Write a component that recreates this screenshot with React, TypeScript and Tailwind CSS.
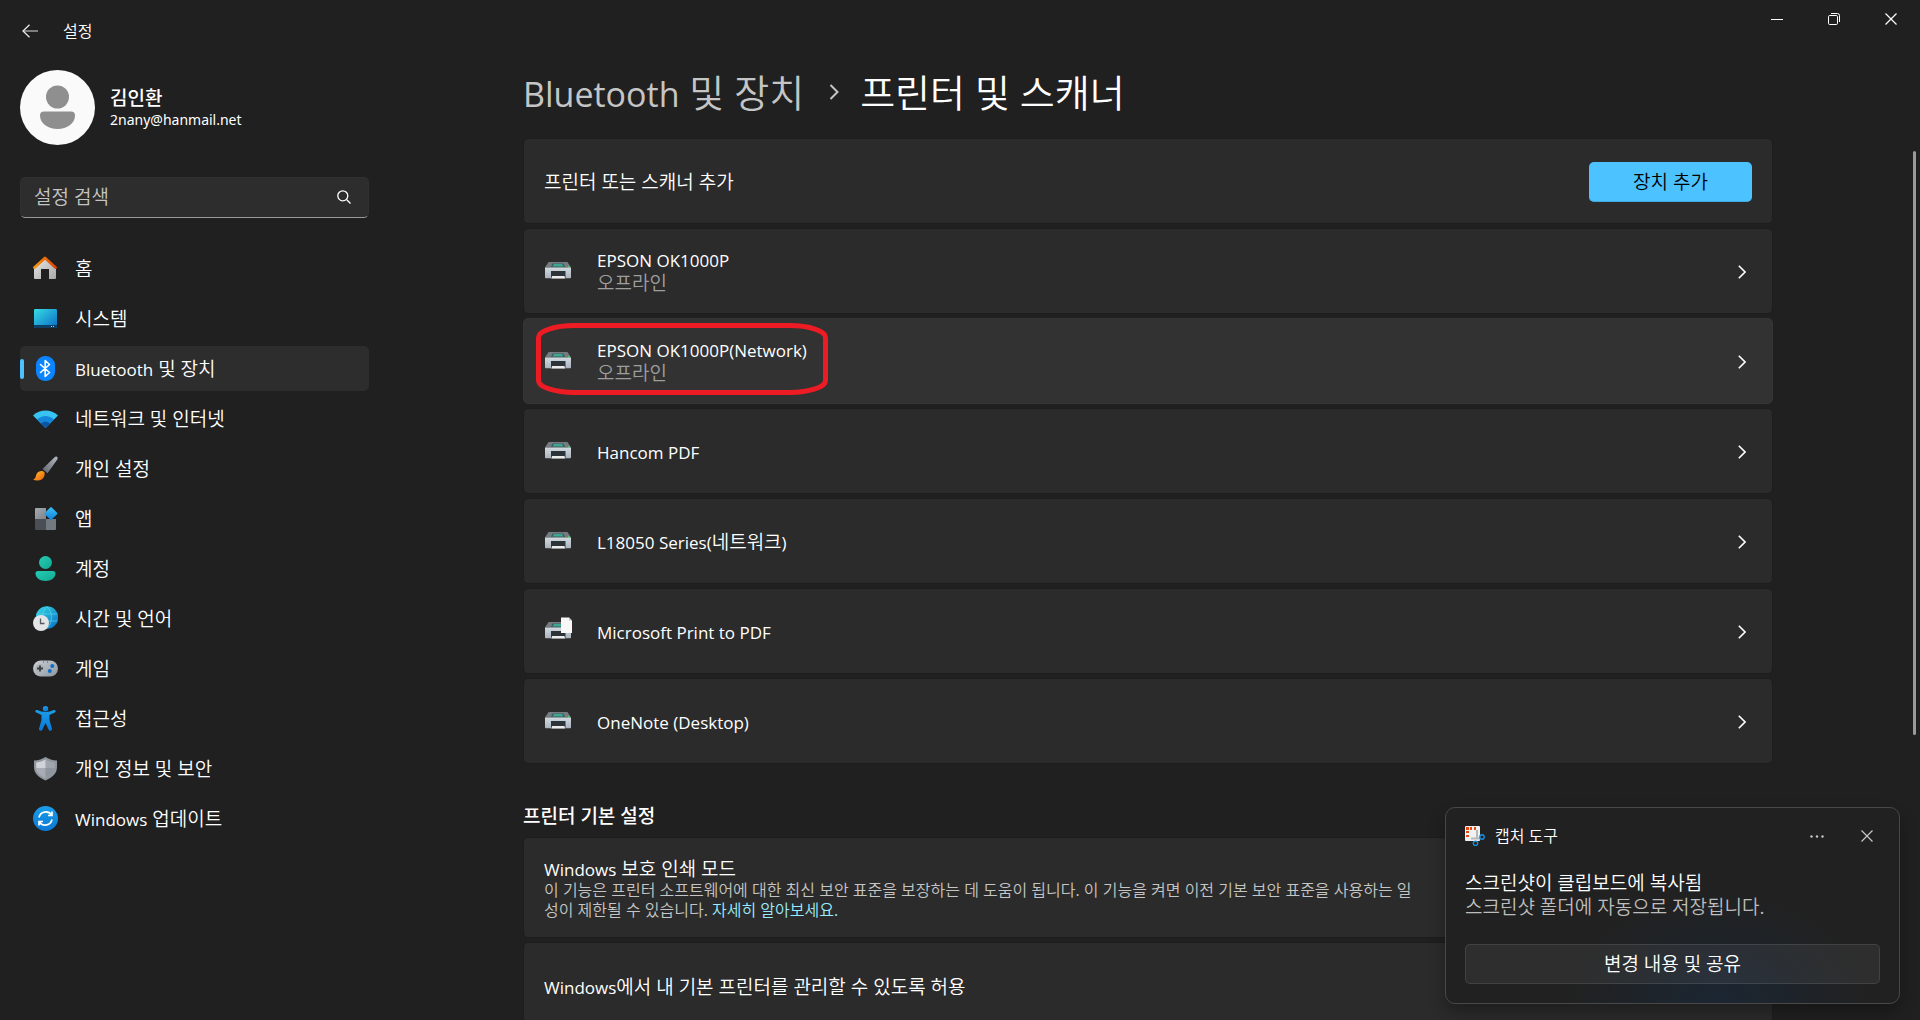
import type { ReactNode } from 'react'

type NavItem = {
  id: string
  label: ReactNode
  icon: ReactNode
}

type Printer = {
  name: ReactNode
  status?: string
  virtual?: boolean
  hovered?: boolean
}

function Gradients() {
  return (
    <svg width="0" height="0" className="absolute" aria-hidden="true">
      <defs>
        <linearGradient id="roof" x1="0" y1="0" x2="1" y2="0">
          <stop offset="0" stopColor="#f5940c" />
          <stop offset="1" stopColor="#dc4405" />
        </linearGradient>
        <linearGradient id="wall" x1="0" y1="0" x2="1" y2="1">
          <stop offset="0" stopColor="#e6e6e6" />
          <stop offset="1" stopColor="#a8a8a8" />
        </linearGradient>
        <linearGradient id="screen" x1="0" y1="0" x2="1" y2="1">
          <stop offset="0" stopColor="#37dbe6" />
          <stop offset="1" stopColor="#0a6cc4" />
        </linearGradient>
        <linearGradient id="handle" x1="1" y1="0" x2="0" y2="1">
          <stop offset="0" stopColor="#b4bac0" />
          <stop offset="1" stopColor="#5d6369" />
        </linearGradient>
        <linearGradient id="bristle" x1="0" y1="0" x2="1" y2="1">
          <stop offset="0" stopColor="#ffc326" />
          <stop offset="1" stopColor="#ee5a13" />
        </linearGradient>
        <linearGradient id="tile" x1="0" y1="0" x2="1" y2="1">
          <stop offset="0" stopColor="#a5abb3" />
          <stop offset="1" stopColor="#7c838b" />
        </linearGradient>
        <linearGradient id="diamond" x1="0" y1="0" x2="1" y2="1">
          <stop offset="0" stopColor="#3cc4f5" />
          <stop offset="1" stopColor="#0d7fdd" />
        </linearGradient>
        <linearGradient id="person" x1="0" y1="0" x2="1" y2="1">
          <stop offset="0" stopColor="#25cdb4" />
          <stop offset="1" stopColor="#12a891" />
        </linearGradient>
        <linearGradient id="metal" x1="0" y1="0" x2="1" y2="1">
          <stop offset="0" stopColor="#cdd3d8" />
          <stop offset="1" stopColor="#8d959d" />
        </linearGradient>
        <linearGradient id="blue" x1="0" y1="0" x2="0" y2="1">
          <stop offset="0" stopColor="#1b9de8" />
          <stop offset="1" stopColor="#0a78d6" />
        </linearGradient>
        <linearGradient id="casing" x1="0" y1="0" x2="0" y2="1">
          <stop offset="0" stopColor="#d3dae0" />
          <stop offset="1" stopColor="#a9b3bd" />
        </linearGradient>
      </defs>
    </svg>
  )
}

function NavIcon({ children }: { children: ReactNode }) {
  return (
    <svg viewBox="0 0 25 25" className="size-[25px] shrink-0" fill="none" aria-hidden="true">
      {children}
    </svg>
  )
}

const navItems: NavItem[] = [
  {
    id: 'home',
    label: '홈',
    icon: (
      <NavIcon>
        <path d="M1 12 12 3l11 9v10a1 1 0 0 1-1 1h-6V13H8v10H2a1 1 0 0 1-1-1z" fill="url(#wall)" />
        <path d="M1.500 11.500 12 2l10.500 9.500" stroke="url(#roof)" strokeWidth="2.800" strokeLinecap="round" strokeLinejoin="round" />
      </NavIcon>
    ),
  },
  {
    id: 'system',
    label: '시스템',
    icon: (
      <NavIcon>
        <rect x="1" y="3" width="23" height="19" rx="1.200" fill="url(#screen)" />
        <path d="M1 19h23v1.800a1.200 1.200 0 0 1-1.200 1.200H2.200A1.200 1.200 0 0 1 1 20.800z" fill="#0c3f63" />
        <path d="M18 20h1v1h-1zM20 20h1v1h-1z" fill="#9fd4f2" />
      </NavIcon>
    ),
  },
  {
    id: 'bluetooth',
    label: (
      <>
        <span className="text-[17px] leading-none">Bluetooth</span> 및 장치
      </>
    ),
    icon: (
      <NavIcon>
        <rect x="3" y="0" width="19" height="25" rx="9" fill="#0a84ff" />
        <path d="m7.500 8.500 9 8-4.300 4V4.500l4.300 4-9 8" stroke="#fff" strokeWidth="1.600" strokeLinejoin="round" strokeLinecap="round" />
      </NavIcon>
    ),
  },
  {
    id: 'network',
    label: '네트워크 및 인터넷',
    icon: (
      <NavIcon>
        <path d="M0 9.500C7 2.700 18 2.700 25 9.500L12.500 22z" fill="#37c4f3" />
        <path d="M4 13.500c5-4.800 12-4.800 17 0L12.500 22z" fill="#1487dd" />
        <path d="M8 17.500c2.700-2.500 6.300-2.500 9 0L12.500 22z" fill="#0b55a5" />
      </NavIcon>
    ),
  },
  {
    id: 'personal',
    label: '개인 설정',
    icon: (
      <NavIcon>
        <path d="M23.500.5c1.200.4 1.500 1.700.8 3L14.500 17.300 9.500 13 21.500 1.200c.6-.6 1.400-.9 2-.7z" fill="url(#handle)" />
        <path d="M11.500 16.500c1 3-1.500 8-6.500 8-2 0-3.800-.4-4.700-1 2.700-1.200 2.200-3 3.200-5.300 1.600-3.700 6.700-4.200 8-1.700z" fill="url(#bristle)" />
      </NavIcon>
    ),
  },
  {
    id: 'apps',
    label: '앱',
    icon: (
      <NavIcon>
        <path d="M2 3a1 1 0 0 1 1-1h10v11H2z" fill="url(#tile)" />
        <path d="M2 13h11v11H3a1 1 0 0 1-1-1z" fill="#4a4f55" />
        <path d="M13 13h10v10a1 1 0 0 1-1 1h-9z" fill="#737981" />
        <rect x="13.200" y="2.700" width="9.600" height="9.600" rx="1" transform="rotate(45 18 7.500)" fill="url(#diamond)" />
      </NavIcon>
    ),
  },
  {
    id: 'accounts',
    label: '계정',
    icon: (
      <NavIcon>
        <circle cx="12.500" cy="6.500" r="6.500" fill="url(#person)" />
        <path d="M5 15h15a2.500 2.500 0 0 1 2.500 2.500C22.500 22 18 25 12.500 25s-10-3-10-7.500A2.500 2.500 0 0 1 5 15z" fill="url(#person)" />
      </NavIcon>
    ),
  },
  {
    id: 'time',
    label: '시간 및 언어',
    icon: (
      <NavIcon>
        <circle cx="14" cy="11.500" r="11.200" fill="url(#screen)" />
        <path d="M3.500 8h21M3.500 15h21M14 .5c-6 6-6 16 0 22M14 .5c6 6 6 16 0 22" stroke="#5fe0ee" strokeOpacity=".6" />
        <circle cx="8" cy="17" r="8" fill="#e3e4e6" />
        <path d="M7.500 12.500v5h4" stroke="#55585c" strokeWidth="1.300" />
      </NavIcon>
    ),
  },
  {
    id: 'gaming',
    label: '게임',
    icon: (
      <NavIcon>
        <rect x="0" y="4.500" width="25" height="16" rx="8" fill="url(#metal)" />
        <circle cx="7" cy="12.500" r="4.500" fill="#aeb4ba" />
        <path d="M7 9.500v6M4 12.500h6" stroke="#3a3e42" strokeWidth="1.800" />
        <circle cx="19.300" cy="10" r="2" fill="#0e6fc9" />
        <circle cx="16.800" cy="15" r="2" fill="#0e6fc9" />
        <path d="M10 5.500h1v1h-1zM14 5.500h1v1h-1z" fill="#4a4e52" />
      </NavIcon>
    ),
  },
  {
    id: 'access',
    label: '접근성',
    icon: (
      <NavIcon>
        <circle cx="12.500" cy="2.700" r="2.700" fill="url(#blue)" />
        <path
          d="M4.200 4c3 1.200 5 2 8.300 2s5.300-.8 8.300-2c1.700-.6 2.700 1.700 1 2.500L16.500 9v5l2.500 8.700c.4 2-2.200 3-3.200 1.200L12.500 17l-3.300 6.900C8.200 25.700 5.600 24.700 6 22.700L8.500 14V9L3.200 6.500c-1.700-.8-.7-3.100 1-2.500z"
          fill="url(#blue)"
        />
      </NavIcon>
    ),
  },
  {
    id: 'privacy',
    label: '개인 정보 및 보안',
    icon: (
      <NavIcon>
        <path d="M12.500 1c3 2 7 3.300 11.500 3.500V11c0 6.500-4.500 10.500-11.500 13.500C5.500 21.500 1 17.500 1 11V4.500C5.500 4.300 9.500 3 12.500 1z" fill="#9097a0" />
        <path d="M12.500 3.500c2.700 1.500 5.700 2.600 9.300 2.900V11c0 5-3.300 8.300-9.300 11z" fill="#a0a6ad" />
        <path d="M12.500 3.500C9.800 5 6.800 6.100 3.200 6.400V11c0 5 3.300 8.300 9.300 11z" fill="#d0d4d8" />
        <path d="M3.200 12h18.600c-.7 4.400-4 7.500-9.300 10-5.300-2.500-8.600-5.600-9.300-10z" fill="#7f868e" fillOpacity=".5" />
      </NavIcon>
    ),
  },
  {
    id: 'update',
    label: (
      <>
        <span className="text-[17px] leading-none">Windows</span> 업데이트
      </>
    ),
    icon: (
      <NavIcon>
        <circle cx="12.500" cy="12.500" r="12.500" fill="url(#blue)" />
        <path d="M6 11.500a7 7 0 0 1 12.500-2.700M19 5.500v4h-4M19 13.500a7 7 0 0 1-12.500 2.700M6 19.500v-4h4" stroke="#fff" strokeWidth="1.700" />
      </NavIcon>
    ),
  },
]

const printers: Printer[] = [
  { name: 'EPSON OK1000P', status: '오프라인' },
  { name: 'EPSON OK1000P(Network)', status: '오프라인', hovered: true },
  { name: 'Hancom PDF' },
  {
    name: (
      <>
        L18050 Series(<span className="text-[19px] leading-none">네트워크</span>)
      </>
    ),
  },
  { name: 'Microsoft Print to PDF', virtual: true },
  { name: 'OneNote (Desktop)' },
]

function PrinterIcon({ virtual }: { virtual?: boolean }) {
  return (
    <svg viewBox="0 0 28 28" className="mb-0.5 size-7 shrink-0" aria-hidden="true">
      <path d="M4.500 5h19L27 10.500H1z" fill="#747c81" />
      <path d="M8.500 6.500h11l1.500 3.500H7z" fill="#3c5a60" />
      <path d="M10 7h8l1.500 2.500h-11z" fill="#3da890" />
      <path d="M24 9h1.500v1.500H24z" fill="#35e04c" />
      <path d="M1 10.500h26v10a.8.800 0 0 1-.8.800H1.800a.8.800 0 0 1-.8-.8z" fill="url(#casing)" />
      <path d="M7 14h14.500v6.800H7z" fill="#2d3439" />
      <path d="M8 19h12.500l.5 2.500H7.500z" fill="#ececec" />
      {virtual && (
        <>
          <path d="M17 .5h8l3 3V16H17z" fill="#f7f7f7" />
          <path d="m25 .5 3 3h-3z" fill="#bdbdbd" />
        </>
      )}
    </svg>
  )
}

function Chevron() {
  return (
    <svg viewBox="0 0 8 14" className="h-3.5 w-2 shrink-0" fill="none" stroke="#fff" strokeWidth="1.600" aria-hidden="true">
      <path d="m.8.8 6.200 6.200-6.200 6.200" />
    </svg>
  )
}

function CloseIcon() {
  return (
    <svg viewBox="0 0 12 12" className="size-3" stroke="currentColor" strokeWidth="1.200" aria-hidden="true">
      <path d="m.5.5 11 11M11.500.5l-11 11" />
    </svg>
  )
}

function TitleBar() {
  return (
    <header className="flex h-[62px] shrink-0 items-start justify-between">
      <div className="flex h-[61px] items-center gap-[25px] pl-[22px]">
        <button type="button" aria-label="뒤로">
          <svg viewBox="0 0 16 14" className="h-3.5 w-4" fill="none" aria-hidden="true">
            <path d="M1 7h15" stroke="#a8a8a8" strokeWidth="1.400" />
            <path d="M7.500.8 1 7l6.500 6.200" stroke="#e8e8e8" strokeWidth="1.300" />
          </svg>
        </button>
        <span className="text-base leading-5">설정</span>
      </div>
      <div className="flex pr-px">
        <button type="button" aria-label="최소화" className="flex h-[38px] w-[57px] items-center justify-center">
          <span className="h-px w-3 bg-white" />
        </button>
        <button type="button" aria-label="이전 크기로 복원" className="flex h-[38px] w-[57px] items-center justify-center">
          <svg viewBox="0 0 12 12" className="size-3" fill="none" stroke="#fff" aria-hidden="true">
            <rect x=".5" y="2.500" width="9" height="9" rx="1.200" />
            <path d="M3 .5h6.500a2 2 0 0 1 2 2V9" />
          </svg>
        </button>
        <button type="button" aria-label="닫기" className="flex h-[38px] w-[57px] items-center justify-center">
          <CloseIcon />
        </button>
      </div>
    </header>
  )
}

function Sidebar() {
  return (
    <aside className="w-[376px] shrink-0 pt-2 pr-[7px] pl-5">
      <div className="flex items-center gap-[15px]">
        <svg viewBox="0 0 75 75" className="size-[75px]" aria-hidden="true">
          <circle cx="37.500" cy="37.500" r="37.500" fill="#fafafa" />
          <circle cx="37.500" cy="27" r="11.500" fill="#8f8f8f" />
          <path d="M24 41.500h27a4 4 0 0 1 4 4C55 53.500 47 59 37.500 59S20 53.500 20 45.500a4 4 0 0 1 4-4z" fill="#8f8f8f" />
        </svg>
        <div>
          <p className="font-['Open_Sans','Noto_Sans_CJK_KR',sans-serif] text-[19px] leading-6 font-medium">김인환</p>
          <p className="font-['Noto_Sans',sans-serif] text-[14px] leading-5">2nany@hanmail.net</p>
        </div>
      </div>

      <label className="mt-8 flex h-[41px] items-center rounded-[5px] border border-[#303030] border-b-[#9a9a9a] bg-[#2d2d2d] pr-[17px] pb-0.5 pl-[13px]">
        <input
          type="text"
          aria-label="설정 검색"
          placeholder="설정 검색"
          className="min-w-0 flex-1 bg-transparent text-[19px] leading-6 outline-none placeholder:text-[#c5c5c5]"
        />
        <svg viewBox="0 0 14 14" className="size-3.5" fill="none" stroke="#fff" strokeWidth="1.300" aria-hidden="true">
          <circle cx="5.800" cy="5.800" r="5" />
          <path d="m9.500 9.500 4 4" />
        </svg>
      </label>

      <nav className="mt-7 flex flex-col gap-[5px]">
        {navItems.map((item) => {
          const active = item.id === 'bluetooth'
          return (
            <a
              key={item.id}
              href={`#${item.id}`}
              aria-current={active ? 'page' : undefined}
              className={`flex h-[45px] items-center rounded-[5px] ${active ? 'bg-[#2d2d2d]' : ''}`}
            >
              <span className={`h-5 w-1 rounded-full ${active ? 'bg-[#4cc2ff]' : ''}`} />
              <span className="ml-[9px]">{item.icon}</span>
              <span className="ml-[17px] text-[19px] leading-6">{item.label}</span>
            </a>
          )
        })}
      </nav>
    </aside>
  )
}

function PrinterRow({ printer }: { printer: Printer }) {
  return (
    <button
      type="button"
      className={`relative flex min-h-[86px] w-full items-center rounded-[5px] border pt-0.5 pr-[26px] pl-5 text-left ${
        printer.hovered ? 'border-[#353535] bg-[#323232]' : 'border-[#1d1d1d] bg-[#2b2b2b]'
      }`}
    >
      <PrinterIcon virtual={printer.virtual} />
      <span className={`ml-[25px] flex flex-1 flex-col ${printer.status ? '' : 'pt-0.5'}`}>
        <span className="text-[17px] leading-[22px]">{printer.name}</span>
        {printer.status && <span className="text-[19px] leading-[22px] text-[#9e9e9e]">{printer.status}</span>}
      </span>
      <Chevron />
      {printer.hovered && (
        <svg viewBox="0 0 292 72" className="absolute top-1 left-3 h-[72px] w-[292px]" fill="none" aria-hidden="true">
          <rect x="2.500" y="2.500" width="287" height="67" rx="36" ry="12" stroke="#ed1c24" strokeWidth="5" />
        </svg>
      )}
    </button>
  )
}

function Toast() {
  return (
    <section className="absolute right-5 bottom-4 w-[455px] rounded-[10px] border border-[#484848] bg-[#212121] bg-[radial-gradient(ellipse_150px_110px_at_60%_100%,#1b2632,#212121)] px-[19px] pt-[18px] pb-[19px] shadow-[0_8px_16px_rgba(0,0,0,0.3)]">
      <div className="flex h-5 items-center">
        <svg viewBox="0 0 20 20" className="size-5" fill="none" aria-hidden="true">
          <rect width="15" height="15" rx="1" fill="#f1f1f1" />
          <path d="M1 1h3v3H1zM5 1h2v3H5zM9 1h2v3H9zM1 5h3v2H1zM1 9h3v2H1z" fill="#e2480f" />
          <path d="M12 4v9M6 12.500h9" stroke="#b3b8bc" strokeWidth="2" />
          <circle cx="17" cy="11" r="2.200" stroke="#1a8fdb" strokeWidth="1.400" />
          <circle cx="10.500" cy="17.300" r="2.200" stroke="#1a8fdb" strokeWidth="1.400" />
        </svg>
        <span className="ml-2.5 flex-1 text-base leading-5">캡처 도구</span>
        <button type="button" aria-label="추가 옵션" className="text-[#c8c8c8]">
          <svg viewBox="0 0 14 3" className="h-[3px] w-3.5" fill="currentColor" aria-hidden="true">
            <circle cx="1.500" cy="1.500" r="1.200" />
            <circle cx="7" cy="1.500" r="1.200" />
            <circle cx="12.500" cy="1.500" r="1.200" />
          </svg>
        </button>
        <button type="button" aria-label="알림 닫기" className="mr-[7px] ml-[37px] text-[#c8c8c8]">
          <CloseIcon />
        </button>
      </div>
      <p className="mt-[25px] text-[19px] leading-6">스크린샷이 클립보드에 복사됨</p>
      <p className="text-[19px] leading-6 text-[#bdbdbd]">스크린샷 폴더에 자동으로 저장됩니다.</p>
      <button type="button" className="mt-[25px] h-10 w-full rounded-[5px] border border-white/10 bg-white/6 text-[19px] leading-6">
        변경 내용 및 공유
      </button>
    </section>
  )
}

export default function App() {
  return (
    <div className="relative flex h-screen flex-col overflow-hidden bg-[#202020] font-['Open_Sans','Noto_Sans_CJK_KR_DemiLight','Noto_Sans_CJK_KR',sans-serif] text-white">
      <Gradients />
      <TitleBar />
      <div className="flex min-h-0 flex-1">
        <Sidebar />
        <main className="flex min-w-0 flex-1 justify-center overflow-hidden pt-1">
          <div className="w-full max-w-[1250px]">
            <h1 className="flex items-center text-[38px] leading-[52px]">
              <a href="#bluetooth" className="text-[#c5c5c5]">
                <span className="text-[34px] leading-none">Bluetooth</span> 및 장치
              </a>
              <svg viewBox="0 0 10 16" className="mr-[21px] ml-[25px] h-4 w-2.5" fill="none" stroke="#c5c5c5" strokeWidth="2" aria-hidden="true">
                <path d="m1.500 1 7 7-7 7" />
              </svg>
              <span>프린터 및 스캐너</span>
            </h1>

            <div className="mt-5 flex flex-col gap-1">
              <div className="flex min-h-[86px] items-center justify-between rounded-[5px] border border-[#1d1d1d] bg-[#2b2b2b] px-5 pt-0.5">
                <span className="text-[19px] leading-6">프린터 또는 스캐너 추가</span>
                <button type="button" className="h-10 w-[163px] rounded-[5px] border-b border-[#43a9dd] bg-[#4cc2ff] text-[19px] leading-6 text-black">
                  장치 추가
                </button>
              </div>
              {printers.map((printer, i) => (
                <PrinterRow key={i} printer={printer} />
              ))}
            </div>

            <h2 className="mt-10 font-['Open_Sans','Noto_Sans_CJK_KR',sans-serif] text-[19px] leading-6 font-medium">프린터 기본 설정</h2>
            <div className="mt-[9px] flex flex-col gap-1">
              <div className="rounded-[5px] border border-[#1d1d1d] bg-[#2b2b2b] px-5 pt-5 pb-[17px]">
                <p className="text-[19px] leading-[22px]">
                  <span className="text-[17px] leading-none">Windows</span> 보호 인쇄 모드
                </p>
                <p className="text-base leading-5 text-[#c5c5c5]">
                  이 기능은 프린터 소프트웨어에 대한 최신 보안 표준을 보장하는 데 도움이 됩니다. 이 기능을 켜면 이전 기본 보안 표준을 사용하는 일
                  <br />
                  성이 제한될 수 있습니다.{' '}
                  <a href="#protected-print" className="text-[#99ebff]">
                    자세히 알아보세요.
                  </a>
                </p>
              </div>
              <div className="flex min-h-[86px] items-center rounded-[5px] border border-[#1d1d1d] bg-[#2b2b2b] px-5 pt-1">
                <p className="text-[19px] leading-6">
                  <span className="text-[17px] leading-none">Windows</span>에서 내 기본 프린터를 관리할 수 있도록 허용
                </p>
              </div>
            </div>
          </div>
        </main>
      </div>
      <div className="absolute top-[151px] right-1 h-[584px] w-[3px] rounded-full bg-[#9a9a9a]" />
      <Toast />
    </div>
  )
}
